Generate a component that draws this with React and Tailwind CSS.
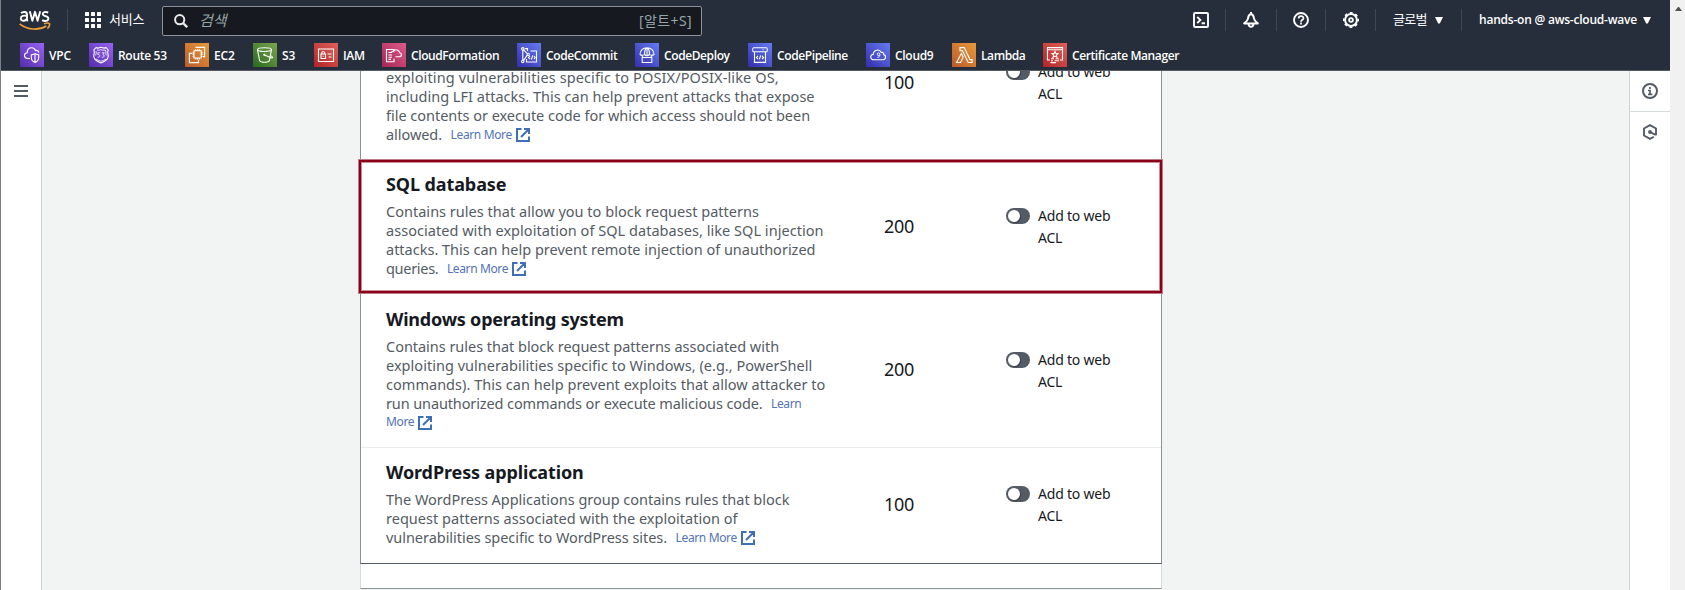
import React from 'react';

const RULES = [
  {
    row: 'h-[100px] -mt-[11px] pt-[8px]',
    num: 'mt-[2px]',
    sw: '-mt-[4px]',
    lines: [
      ['exploiting vulnerabilities specific to POSIX/POSIX-like OS,', 'tracking-[0.12px]'],
      ['including LFI attacks. This can help prevent attacks that expose', 'tracking-[0.02px]'],
      ['file contents or execute code for which access should not been', 'tracking-[-0.02px]'],
      ['allowed.', 'tracking-[-0.05px]', 'Learn More', true],
    ],
    value: '100',
  },
  {
    row: 'h-[135px] pt-[12px]',
    num: 'mt-[42px]',
    sw: 'mt-[36px]',
    title: ['SQL database', 'tracking-[-0.1px]'],
    lines: [
      ['Contains rules that allow you to block request patterns', 'tracking-[0.02px]'],
      ['associated with exploitation of SQL databases, like SQL injection', 'tracking-[0.04px]'],
      ['attacks. This can help prevent remote injection of unauthorized', ''],
      ['queries.', 'tracking-[-0.3px]', 'Learn More', true],
    ],
    value: '200',
  },
  {
    row: 'h-[153px] pt-[12px] border-b border-[#eaeded]',
    num: 'mt-[50px]',
    sw: 'mt-[45px]',
    title: ['Windows operating system', 'tracking-[-0.22px]'],
    lines: [
      ['Contains rules that block request patterns associated with', 'tracking-[-0.03px]'],
      ['exploiting vulnerabilities specific to Windows, (e.g., PowerShell', 'tracking-[0.03px]'],
      ['commands). This can help prevent exploits that allow attacker to', 'tracking-[0.03px]'],
      ['run unauthorized commands or execute malicious code.', 'tracking-[-0.12px]', 'Learn'],
      ['', '', 'More', true],
    ],
    value: '200',
  },
  {
    row: 'h-[115px] pt-[12px]',
    num: 'mt-[32px]',
    sw: 'mt-[26px]',
    title: ['WordPress application', 'tracking-[-0.12px]'],
    lines: [
      ['The WordPress Applications group contains rules that block', 'tracking-[-0.02px]'],
      ['request patterns associated with the exploitation of', 'tracking-[0.02px]'],
      ['vulnerabilities specific to WordPress sites.', 'tracking-[-0.04px]', 'Learn More', true],
    ],
    value: '100',
  },
];

const PURPLE = 'bg-linear-to-tr from-[#532cad] to-[#9a62f2]';
const ORANGE = 'bg-linear-to-tr from-[#bd5a2a] to-[#e79a3c]';
const GREEN = 'bg-linear-to-tr from-[#276a1e] to-[#7aa650]';
const RED = 'bg-linear-to-tr from-[#b02328] to-[#e0605a]';
const PINK = 'bg-linear-to-tr from-[#a52555] to-[#df5a88]';
const BLUE = 'bg-linear-to-tr from-[#352cab] to-[#667cf2]';

const SERVICES = [
  {
    name: 'VPC', w: 'w-[69px]', bg: PURPLE, track: 'tracking-[-0.2px]',
    art: <><path d="M10 15.5H7.5C5.8 15.5 4.5 14.2 4.5 12.6C4.5 11 5.7 10 7.1 9.8C7.2 6.8 9 4.8 11.6 4.8C13.5 4.8 14.8 5.8 15.4 7.5C17.3 7 18.7 8 18.8 9.6" /><path d="M15 10.8L18.7 12V14.6C18.7 17 17.3 18.6 15 19.6C12.7 18.6 11.3 17 11.3 14.6V12ZM15 11V19.4" /></>,
  },
  {
    name: 'Route 53', w: 'w-[96px]', bg: PURPLE, track: 'tracking-[-0.3px]',
    art: <><path d="M7 4.6C8.4 5.4 10 5.2 12 4.3C14 5.2 15.6 5.4 17 4.6L19.2 7C18 9 18.6 10.5 19.2 12.2C20 15.5 17 18 12 20C7 18 4 15.5 4.8 12.2C5.4 10.5 6 9 4.8 7Z" /><path d="M8 7C9.5 7.4 11 7.1 12 6.6C13 7.1 14.5 7.4 16 7L17 8M7 16C8.5 17 10 17.6 12 18.3C14 17.6 15.5 17 17 16M7 8C7.6 9.5 7 11 6.6 12.5M17 8C16.4 9.5 17 11 17.4 12.5" strokeWidth=".8" /><path d="M11.2 9.8H8.8V11.6C11.5 11.3 11.5 14.6 8.6 14.2M12.8 9.8H15.3L13.9 11.7C16 12 15.6 14.6 12.7 14.2" strokeWidth=".8" /></>,
  },
  {
    name: 'EC2', w: 'w-[68px]', bg: ORANGE, track: 'tracking-[-0.1px]',
    art: <><path d="M9 7.8H16.2V15H9ZM10.8 7.8V6.2M12.6 7.8V6.2M14.4 7.8V6.2M10.8 15V16.6M12.6 15V16.6M14.4 15V16.6M9 9.6H7.6M9 11.4H7.6M9 13.2H7.6M16.2 9.6H17.6M16.2 11.4H17.6M16.2 13.2H17.6" /><path d="M10.5 4.4H19.6V13.6H18M7.2 10.4H4.4V19.6H13.5V17" /></>,
  },
  {
    name: 'S3', w: 'w-[61px]', bg: GREEN, track: 'tracking-[-0.1px]',
    art: <><ellipse cx="11.5" cy="6.6" rx="7" ry="1.9" /><path d="M4.5 6.8L6.7 17.8C8 19.8 15 19.8 16.3 17.8L18.5 6.8M11.5 12L18 14.8C20 15.2 20.2 14.2 17.8 12.6" /><circle cx="11.4" cy="11.8" r=".6" /></>,
  },
  {
    name: 'IAM', w: 'w-[68px]', bg: RED, track: 'tracking-[-0.3px]',
    art: <><path d="M4.5 6H19.5V18.5H4.5ZM7 11H11.5V15.5H7ZM7.9 11V9.6C7.9 8.1 10.6 8.1 10.6 9.6V11M9.2 12.8V13.8M13.5 11H17.5M14.5 14H17.5" /></>,
  },
  {
    name: 'CloudFormation', w: 'w-[135px]', bg: PINK, track: 'tracking-[-0.4px]',
    art: <><path d="M12 8.5V6.5H4.5V18.8H12V15.8M6.5 9.5H9M6.5 12H10M6.5 14.2H10M6.5 16.4H9" /><path d="M13.5 13.8H17.2C20.2 13.8 20 10 17.6 9.8C17.4 7 13.4 5.4 11.4 8.4C10 8 9.4 9 9.5 10" /></>,
  },
  {
    name: 'CodeCommit', w: 'w-[118px]', bg: BLUE, track: 'tracking-[-0.4px]',
    art: <><circle cx="5.8" cy="5.8" r="1.2" /><circle cx="5.8" cy="18.4" r="1.2" /><circle cx="11.2" cy="11.4" r="1.1" /><path d="M5.8 7V17.2M6.6 6.8L10.4 10.6M10.3 12.1L6.7 17.4M8 5.6H10.5V8M13.5 8H19.5V19H9.5V16M13 13L11.5 14.6L13 16.2M15.8 12.4L14.4 16.6M17 13L18.2 14.6L17 16.2" /></>,
  },
  {
    name: 'CodeDeploy', w: 'w-[113px]', bg: BLUE, track: 'tracking-[-0.4px]',
    art: <><path d="M5 11.5C5 2.5 19 2.5 19 11.5C17 13 15.5 12 14.5 11.5C13 13 11 13 9.5 11.5C8.5 12 7 13 5 11.5M9.5 11.5C9.5 8 10.5 5.6 12 4.8C13.5 5.6 14.5 8 14.5 11.5M12 4.6V12M7.2 14.5H16.8V19.5H7.2ZM7 12.4L8 14.5M17 12.4L16 14.5" /></>,
  },
  {
    name: 'CodePipeline', w: 'w-[118px]', bg: BLUE, track: 'tracking-[-0.4px]',
    art: <><path d="M5.5 4.8H18.5C19.6 4.8 19.6 8.8 18.5 8.8H5.5C4.4 8.8 4.4 4.8 5.5 4.8ZM6.5 8.8V19.4H17.5V8.8M14.5 6.8H15.5M10 12.8L8.4 14.4L10 16M12.8 12.4L11.2 16.4M14 12.8L15.6 14.4L14 16" /></>,
  },
  {
    name: 'Cloud9', w: 'w-[86px]', bg: BLUE, track: 'tracking-[-0.3px]',
    art: <><path d="M8 16.8C3.8 16.8 3.8 11.6 7.2 11.4C7.4 6.6 13.6 5.6 15.2 9.4C17.4 9 17.8 10.6 17.8 11.6C20.4 12.4 20 16.8 17 16.8Z" /><path d="M13.8 11.8C13.4 13 11.2 12.8 11.2 11.2C11.2 9.4 13.8 9.4 13.8 11.2C13.8 13.2 13.2 14.6 11.4 14.4" strokeWidth=".9" /></>,
  },
  {
    name: 'Lambda', w: 'w-[91px]', bg: ORANGE, track: 'tracking-[-0.4px]',
    art: <><path d="M8 4.6H12.2L18 16.6H20V19.5H16.2L10.4 7.6H8ZM9.4 10.4L11.2 14L8.6 19.5H4.6Z" /></>,
  },
  {
    name: 'Certificate Manager', w: 'w-[140px]', bg: RED, track: 'tracking-[-0.4px]',
    art: <><path d="M7 17H4.5V4.6H19.5V17H17M4.5 6.8H19.5" /><path d="M12 8.4L12.9 10.4L15 10.6L13.4 12L13.9 14.2L12 13.1L10.1 14.2L10.6 12L9 10.6L11.1 10.4ZM8 15.8H11M12.5 15.8H16M8 17.8H10M11.5 17.8H16M7.5 19.6H13" /></>,
  },
];

function Divider({ className = '' }) {
  return <div className={`h-[22px] w-px shrink-0 bg-[#414750] ${className}`} />;
}

function Caret() {
  return (
    <svg className="h-[7px] w-[8px] shrink-0" viewBox="0 0 8 7" fill="#fff">
      <path d="M0 0H8L4.8 6.6H3.2Z" />
    </svg>
  );
}

function ExternalIcon() {
  return (
    <svg className="ml-[4px] mt-[2px] h-[14px] w-[14px] shrink-0" viewBox="0 0 14 14" fill="none" stroke="#3f6fb5" strokeWidth="2">
      <path d="M5.5 1H1V13H13V8.5M8 1H13V6M13 1L5 9" />
    </svg>
  );
}

function Header() {
  return (
    <header className="relative z-10 h-[71px] w-[1670px] shrink-0 border-b border-[#545b64] bg-[#272e3b] text-white">
      <div className="flex h-[40px] items-center">
        <svg className="ml-[19px] mt-px h-[22px] w-[32px] shrink-0" viewBox="0 0 32 22" fill="none">
          <g stroke="#fff" strokeWidth="1.9">
            <path d="M2 3.2C3.6 1.6 8 1.2 8 4.4V9.2C8 10 8.3 10.6 8.8 11.2M8 6C5 5.2 1.8 5.8 1.8 8.4C1.8 11.6 7 11.4 8 8.4" />
            <path d="M10.8 1.2L13.4 10.8L16 1.8L18.6 10.8L21.2 1.2" strokeLinejoin="round" />
            <path d="M29.2 2.6C27.4 1.6 23.8 1.7 23.8 4C23.8 6.8 29.4 5.6 29.4 8.5C29.4 11.4 25.2 11.4 23.2 10.1" />
          </g>
          <path d="M.6 13.8C9 20.4 20 20.4 27.4 16M25 13.8C27 13 29.4 12.8 30.4 13.6C30.8 14.8 30 17.2 28.4 18.6" stroke="#e99a3a" strokeWidth="1.7" />
        </svg>
        <Divider className="ml-[16px]" />
        <svg className="ml-[17px] h-[16px] w-[16px] shrink-0" viewBox="0 0 16 16" fill="#fff">
          {[0, 6, 12].map((y) => [0, 6, 12].map((x) => <rect key={`${x}-${y}`} x={x} y={y} width="4" height="4" rx=".5" />))}
        </svg>
        <span className="ml-[8px] mb-[3px] w-[53px] shrink-0 whitespace-nowrap text-[13px] leading-[20px] tracking-[-0.2px]">서비스</span>
        <div className="mt-[2px] flex h-[30px] w-[540px] shrink-0 items-center rounded-[2px] border border-[#8d9499] bg-[#16191f] text-[14px] text-[#95a5a6]">
          <svg className="ml-[11px] mb-px h-[14px] w-[14px] shrink-0" viewBox="0 0 14 14" fill="none" stroke="#e8eaea" strokeWidth="2">
            <circle cx="5.7" cy="5.7" r="4.6" />
            <path d="M9 9L13.2 13.2" strokeWidth="2.4" />
          </svg>
          <span className="ml-[11px] mb-[2px] flex-1 text-[15px] italic leading-[20px]">검색</span>
          <span className="mr-[9px] whitespace-nowrap leading-[20px] tracking-[0.4px]">[알트+S]</span>
        </div>
        <svg className="ml-[491px] h-[16px] w-[16px] shrink-0" viewBox="0 0 16 16" fill="none" stroke="#fff" strokeWidth="1.9">
          <rect x="1" y="1" width="14" height="14" rx="1" />
          <path d="M4.2 4.8L7.4 8L4.2 11.2M8.6 11.2H12" />
        </svg>
        <Divider className="ml-[16px]" />
        <svg className="ml-[17px] h-[16px] w-[16px] shrink-0" viewBox="0 0 16 16" fill="none" stroke="#fff" strokeWidth="2" strokeLinejoin="round">
          <path d="M8 0V2M8 2C5.4 2.4 5.4 4.4 5 6.6C4.6 8.8 3 10 1.2 11.4H14.8C13 10 11.4 8.8 11 6.6C10.6 4.4 10.6 2.4 8 2ZM5.6 12C5.8 15.8 10.2 15.8 10.4 12" />
        </svg>
        <Divider className="ml-[17px]" />
        <svg className="ml-[16px] h-[16px] w-[16px] shrink-0" viewBox="0 0 16 16" fill="none" stroke="#fff" strokeWidth="1.9">
          <circle cx="8" cy="8" r="7" />
          <path d="M5.6 6.4C5.6 3.4 10.5 3.4 10.5 6.2C10.5 7.8 8 7.8 8 9.8M8 10.6V12.4" strokeWidth="1.7" />
        </svg>
        <Divider className="ml-[16px]" />
        <svg className="ml-[17px] h-[16px] w-[16px] shrink-0" viewBox="0 0 16 16" fill="none" stroke="#fff">
          <circle cx="8" cy="8" r="5.9" strokeWidth="2" />
          <circle cx="8" cy="8" r="7.2" strokeWidth="1.6" strokeDasharray="2.83 2.83" strokeDashoffset="1.4" />
          <circle cx="8" cy="8" r="1.9" strokeWidth="1.8" />
        </svg>
        <Divider className="ml-[16px]" />
        <span className="ml-[17px] mb-[2px] w-[42px] shrink-0 whitespace-nowrap text-[13px] leading-[20px] tracking-[-0.7px]">글로벌</span>
        <Caret />
        <Divider className="ml-[18px]" />
        <span className="ml-[17px] w-[164px] shrink-0 whitespace-nowrap font-['Open_Sans'] text-[12px] font-semibold leading-[20px] tracking-[-0.22px]">hands-on @ aws-cloud-wave</span>
        <Caret />
      </div>
      <nav className="flex h-[30px] items-center pl-[20px]">
        {SERVICES.map((s) => (
          <div key={s.name} className={`flex shrink-0 items-center ${s.w}`}>
            <span className={`flex h-[24px] w-[24px] shrink-0 ${s.bg}`}>
              <svg className="h-[24px] w-[24px]" viewBox="0 0 24 24" fill="none" stroke="#fff" strokeWidth="1.1">{s.art}</svg>
            </span>
            <span className={`ml-[5px] mt-px whitespace-nowrap font-['Open_Sans'] text-[12px] font-semibold leading-[20px] ${s.track}`}>{s.name}</span>
          </div>
        ))}
      </nav>
    </header>
  );
}

function Rule({ rule }) {
  return (
    <div className={`flex shrink-0 pl-[25px] ${rule.row}`}>
      <div className="w-[498px] shrink-0">
        {rule.title && <h3 className={`mb-[6px] whitespace-nowrap text-[18px] font-bold leading-[24px] text-[#16191f] ${rule.title[1]}`}>{rule.title[0]}</h3>}
        {rule.lines.map(([text, track, link, icon]) => (
          <div key={text + link} className={`flex h-[18.86px] items-center whitespace-nowrap text-[14.5px] leading-[18.86px] text-[#545b64] ${track}`}>
            {text && <span>{text}</span>}
            {link && <a className={`mt-[2px] text-[12px] tracking-[-0.37px] text-[#5273b8] ${text ? 'ml-[8.5px]' : ''}`}>{link}</a>}
            {icon && <ExternalIcon />}
          </div>
        ))}
      </div>
      <div className="w-[122px] shrink-0 text-[18px] leading-[24px] tracking-[-0.3px] text-[#16191f]">
        <div className={rule.num}>{rule.value}</div>
      </div>
      <div className={`flex h-[44px] items-start gap-[8px] ${rule.sw}`}>
        <span className="flex h-[16px] w-[24px] shrink-0 items-center rounded-full bg-[#545b64] pl-[2px]">
          <span className="h-[12px] w-[12px] rounded-full bg-white shadow-[1px_1px_1px_rgba(0,0,0,0.3)]" />
        </span>
        <span className="-mt-[3px] whitespace-nowrap text-[14px] leading-[22px] tracking-[-0.2px] text-[#16191f]">Add to web<br />ACL</span>
      </div>
    </div>
  );
}

export default function App() {
  return (
    <div className="relative flex h-[590px] w-[1685px] overflow-hidden bg-[#f2f3f3] font-['Noto_Sans','Noto_Sans_CJK_KR',sans-serif]">
      <div className="flex w-[1670px] shrink-0 flex-col">
        <Header />
        <div className="flex h-[519px]">
          <aside className="w-[42px] shrink-0 border-r border-[#cfd3d3] bg-white pl-[14px] pt-[14px]">
            <svg className="h-[12px] w-[14px]" viewBox="0 0 14 12" fill="#545b64">
              <path d="M0 0H14V2H0ZM0 5H14V7H0ZM0 10H14V12H0Z" />
            </svg>
          </aside>
          <main className="flex w-[1587px] flex-col pl-[318px]">
            <section className="flex h-[493px] w-[802px] shrink-0 flex-col border-x border-b border-x-[#879196] border-b-[#545b64] bg-white">
              {RULES.map((r, i) => <Rule key={i} rule={r} />)}
            </section>
            <div className="h-[25px] w-[802px] shrink-0 border-x border-b border-x-[#d5dbdb] border-b-[#879196] bg-white" />
          </main>
          <aside className="flex w-[41px] shrink-0 flex-col border-l border-[#cfd3d3] bg-white">
            <div className="flex h-[41px] items-center justify-center border-b border-[#d5dbdb]">
              <svg className="h-[16px] w-[16px]" viewBox="0 0 16 16" fill="none" stroke="#545b64" strokeWidth="2">
                <circle cx="8" cy="8" r="7" />
                <path d="M7.9 4V6M6 7.5H8V11M6 11.3H10.3" strokeWidth="1.7" />
              </svg>
            </div>
            <div className="flex h-[40px] items-center justify-center">
              <svg className="h-[16px] w-[16px]" viewBox="0 0 16 16" fill="none" stroke="#545b64" strokeWidth="1.9">
                <path d="M14 8.6V4.5L8 1.1L2 4.5V11.5L8 14.9L11.8 12.7M14 8.6V11.2" />
                <circle cx="8" cy="8" r="1.9" fill="#545b64" stroke="none" />
                <path d="M8 8L13.6 10.8" />
              </svg>
            </div>
          </aside>
        </div>
      </div>
      <div className="flex w-[15px] shrink-0 justify-center bg-[#f1f1f1] pt-[7px]">
        <svg className="ml-[2px] h-[4px] w-[7px]" viewBox="0 0 7 4" fill="#505050"><path d="M3 0H4L7 4H0Z" /></svg>
      </div>
      <div className="absolute left-0 top-0 z-20 h-[590px] w-px bg-[#7d8084]" />
      <div className="absolute left-[358px] top-[159px] h-[135px] w-[805px] border border-[#c17a88]">
        <div className="h-full w-full border-2 border-[#8a0019]">
          <div className="h-full w-full border border-[#c98e99]" />
        </div>
      </div>
    </div>
  );
}
